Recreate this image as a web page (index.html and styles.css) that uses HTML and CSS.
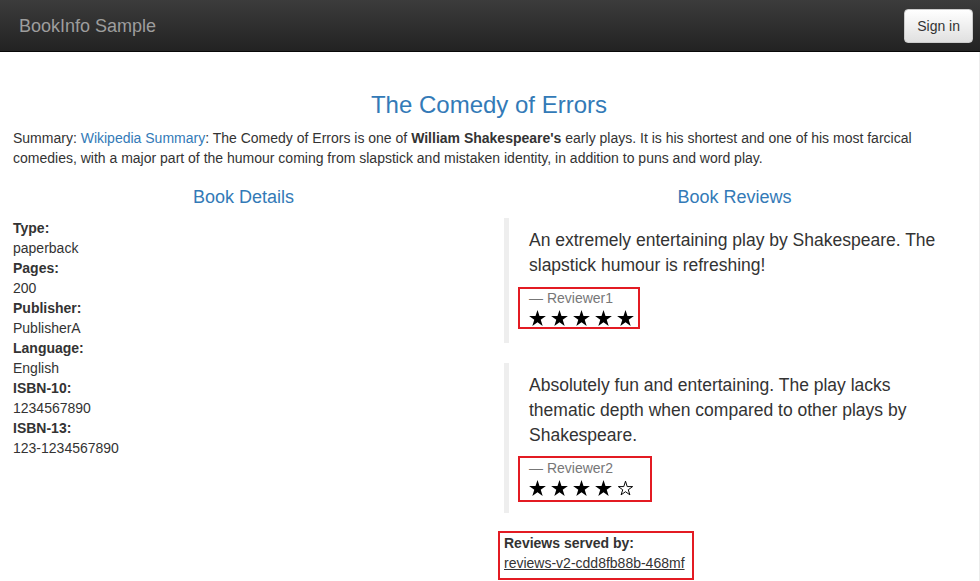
FILE: index.html
```html
<!DOCTYPE html>
<html lang="en">
<head>
<meta charset="utf-8">
<title>Simple Bookstore App</title>
<link rel="stylesheet" href="styles.css">
</head>
<body>
<nav class="navbar">
  <a class="brand" href="#">BookInfo Sample</a>
  <button class="btn-signin" type="button">Sign in</button>
</nav>
<main class="container">
  <h3 class="title">The Comedy of Errors</h3>
  <p class="summary">Summary: <a href="#">Wikipedia Summary</a>: The Comedy of Errors is one of <b>William Shakespeare's</b> early plays. It is his shortest and one of his most farcical comedies, with a major part of the humour coming from slapstick and mistaken identity, in addition to puns and word play.</p>
  <div class="row">
    <section class="col">
      <h4 class="section-title">Book Details</h4>
      <dl class="details">
        <dt>Type:</dt><dd>paperback</dd>
        <dt>Pages:</dt><dd>200</dd>
        <dt>Publisher:</dt><dd>PublisherA</dd>
        <dt>Language:</dt><dd>English</dd>
        <dt>ISBN-10:</dt><dd>1234567890</dd>
        <dt>ISBN-13:</dt><dd>123-1234567890</dd>
      </dl>
    </section>
    <section class="col">
      <h4 class="section-title">Book Reviews</h4>
      <blockquote class="review">
        <p>An extremely entertaining play by Shakespeare. The slapstick humour is refreshing!</p>
        <div class="hl hl-1">
          <small class="reviewer">Reviewer1</small>
          <div class="rating">
            <svg class="star" viewBox="0 0 17.3 16.5"><polygon points="8.65,0 10.7,6.28 17.3,6.29 11.96,10.18 14,16.46 8.65,12.58 3.3,16.46 5.34,10.18 0,6.29 6.6,6.28"/></svg>
            <svg class="star" viewBox="0 0 17.3 16.5"><polygon points="8.65,0 10.7,6.28 17.3,6.29 11.96,10.18 14,16.46 8.65,12.58 3.3,16.46 5.34,10.18 0,6.29 6.6,6.28"/></svg>
            <svg class="star" viewBox="0 0 17.3 16.5"><polygon points="8.65,0 10.7,6.28 17.3,6.29 11.96,10.18 14,16.46 8.65,12.58 3.3,16.46 5.34,10.18 0,6.29 6.6,6.28"/></svg>
            <svg class="star" viewBox="0 0 17.3 16.5"><polygon points="8.65,0 10.7,6.28 17.3,6.29 11.96,10.18 14,16.46 8.65,12.58 3.3,16.46 5.34,10.18 0,6.29 6.6,6.28"/></svg>
            <svg class="star" viewBox="0 0 17.3 16.5"><polygon points="8.65,0 10.7,6.28 17.3,6.29 11.96,10.18 14,16.46 8.65,12.58 3.3,16.46 5.34,10.18 0,6.29 6.6,6.28"/></svg>
          </div>
        </div>
      </blockquote>
      <blockquote class="review">
        <p>Absolutely fun and entertaining. The play lacks thematic depth when compared to other plays by Shakespeare.</p>
        <div class="hl hl-2">
          <small class="reviewer">Reviewer2</small>
          <div class="rating">
            <svg class="star" viewBox="0 0 17.3 16.5"><polygon points="8.65,0 10.7,6.28 17.3,6.29 11.96,10.18 14,16.46 8.65,12.58 3.3,16.46 5.34,10.18 0,6.29 6.6,6.28"/></svg>
            <svg class="star" viewBox="0 0 17.3 16.5"><polygon points="8.65,0 10.7,6.28 17.3,6.29 11.96,10.18 14,16.46 8.65,12.58 3.3,16.46 5.34,10.18 0,6.29 6.6,6.28"/></svg>
            <svg class="star" viewBox="0 0 17.3 16.5"><polygon points="8.65,0 10.7,6.28 17.3,6.29 11.96,10.18 14,16.46 8.65,12.58 3.3,16.46 5.34,10.18 0,6.29 6.6,6.28"/></svg>
            <svg class="star" viewBox="0 0 17.3 16.5"><polygon points="8.65,0 10.7,6.28 17.3,6.29 11.96,10.18 14,16.46 8.65,12.58 3.3,16.46 5.34,10.18 0,6.29 6.6,6.28"/></svg>
            <svg class="star star-empty" viewBox="0 0 17.3 16.5"><polygon points="8.65,1.2 10.4,6.78 16,6.79 11.5,10.1 13.2,15.3 8.65,12.1 4.1,15.3 5.8,10.1 1.3,6.79 6.9,6.78"/></svg>
          </div>
        </div>
      </blockquote>
      <dl class="served hl hl-3">
        <dt>Reviews served by:</dt>
        <dd><u>reviews-v2-cdd8fb88b-468mf</u></dd>
      </dl>
    </section>
  </div>
</main>
</body>
</html>
```

FILE: styles.css
```css
*,
*::before,
*::after {
  box-sizing: border-box;
}

html,
body {
  margin: 0;
  padding: 0;
}

body {
  font-family: "Liberation Sans", Arial, Helvetica, sans-serif;
  font-size: 14px;
  line-height: 20px;
  color: #333;
  background: #fff;
  overflow: hidden;
  box-shadow: inset -1px 0 0 #ececec;
  min-height: 581px;
}

a {
  color: #337ab7;
  text-decoration: none;
}

/* Navbar */
.navbar {
  display: flex;
  align-items: flex-start;
  justify-content: space-between;
  height: 52px;
  padding: 0 7px 0 19px;
  background: linear-gradient(to bottom, #3c3c3c 0, #222 100%);
  border-bottom: 1px solid #080808;
}

.brand {
  color: #9d9d9d;
  font-size: 18px;
  line-height: 20px;
  padding: 16px 0 15px;
}

.btn-signin {
  margin-top: 9px;
  padding: 6px 12px;
  font-family: inherit;
  font-size: 14px;
  line-height: 20px;
  color: #333;
  background: linear-gradient(to bottom, #fff 0, #e0e0e0 100%);
  border: 1px solid #ccc;
  border-radius: 4px;
}

/* Main */
.container {
  width: 982px;
  margin-left: -2px;
  padding: 20px 15px 0;
}

.title {
  margin: 20px 0 10px;
  font-size: 24px;
  line-height: 1.1;
  font-weight: 500;
  color: #337ab7;
  text-align: center;
}

.summary {
  margin: 0 0 10px;
}

.row {
  display: grid;
  grid-template-columns: 1fr 1fr;
  column-gap: 30px;
}

.section-title {
  margin: 10px 0;
  font-size: 18px;
  line-height: 1.1;
  font-weight: 500;
  color: #337ab7;
  text-align: center;
}

.details {
  margin: 0;
}

.details dt,
.served dt {
  font-weight: 700;
}

.details dd,
.served dd {
  margin: 0;
}

/* Reviews */
.review {
  margin: 0 0 20px;
  padding: 10px 20px;
  border-left: 5px solid #eee;
  font-size: 17.5px;
  line-height: 25px;
}

.review p {
  margin: 0 0 10px;
}

.reviewer {
  display: block;
  font-size: 14px;
  line-height: 20px;
  color: #777;
}

.reviewer::before {
  content: "\2014\00A0";
}

.rating {
  display: flex;
  align-items: flex-start;
  gap: 5px;
  height: 25px;
  padding-top: 2px;
}

.star {
  width: 17px;
  height: 16px;
  fill: #000;
}

.star-empty {
  fill: none;
  stroke: #000;
  stroke-width: 1;
}

.served {
  margin: 0;
}

/* Red highlight annotations */
.hl {
  position: relative;
}

.hl::after {
  content: "";
  position: absolute;
  border: 2px solid #e31b23;
  pointer-events: none;
}

.hl-1::after {
  left: -11px;
  top: -1px;
  width: 122px;
  height: 42px;
}

.hl-2::after {
  left: -11px;
  top: -2px;
  width: 134px;
  height: 46px;
}

.hl-3::after {
  left: -6px;
  top: -2px;
  width: 196px;
  height: 49px;
}
```
